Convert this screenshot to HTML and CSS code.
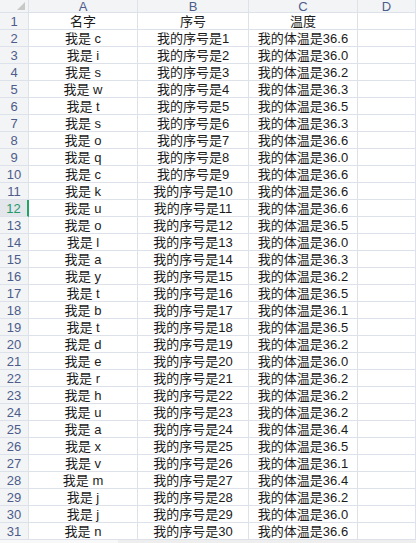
FILE: index.html
```html
<!DOCTYPE html>
<html>
<head>
<meta charset="utf-8">
<link rel="stylesheet" href="styles.css">
</head>
<body>
<div class="sheet">
  <div class="corner"><span class="tri"></span></div><div class="colh">A</div><div class="colh">B</div><div class="colh">C</div><div class="colh">D</div>
  <div class="rowh">1</div><div class="c">名字</div><div class="c">序号</div><div class="c">温度</div><div class="c"></div>
  <div class="rowh">2</div><div class="c">我是 c</div><div class="c">我的序号是1</div><div class="c">我的体温是36.6</div><div class="c"></div>
  <div class="rowh">3</div><div class="c">我是 i</div><div class="c">我的序号是2</div><div class="c">我的体温是36.0</div><div class="c"></div>
  <div class="rowh">4</div><div class="c">我是 s</div><div class="c">我的序号是3</div><div class="c">我的体温是36.2</div><div class="c"></div>
  <div class="rowh">5</div><div class="c">我是 w</div><div class="c">我的序号是4</div><div class="c">我的体温是36.3</div><div class="c"></div>
  <div class="rowh">6</div><div class="c">我是 t</div><div class="c">我的序号是5</div><div class="c">我的体温是36.5</div><div class="c"></div>
  <div class="rowh">7</div><div class="c">我是 s</div><div class="c">我的序号是6</div><div class="c">我的体温是36.3</div><div class="c"></div>
  <div class="rowh">8</div><div class="c">我是 o</div><div class="c">我的序号是7</div><div class="c">我的体温是36.6</div><div class="c"></div>
  <div class="rowh">9</div><div class="c">我是 q</div><div class="c">我的序号是8</div><div class="c">我的体温是36.0</div><div class="c"></div>
  <div class="rowh">10</div><div class="c">我是 c</div><div class="c">我的序号是9</div><div class="c">我的体温是36.6</div><div class="c"></div>
  <div class="rowh">11</div><div class="c">我是 k</div><div class="c">我的序号是10</div><div class="c">我的体温是36.6</div><div class="c"></div>
  <div class="rowh active">12</div><div class="c">我是 u</div><div class="c">我的序号是11</div><div class="c">我的体温是36.6</div><div class="c"></div>
  <div class="rowh">13</div><div class="c">我是 o</div><div class="c">我的序号是12</div><div class="c">我的体温是36.5</div><div class="c"></div>
  <div class="rowh">14</div><div class="c">我是 l</div><div class="c">我的序号是13</div><div class="c">我的体温是36.0</div><div class="c"></div>
  <div class="rowh">15</div><div class="c">我是 a</div><div class="c">我的序号是14</div><div class="c">我的体温是36.3</div><div class="c"></div>
  <div class="rowh">16</div><div class="c">我是 y</div><div class="c">我的序号是15</div><div class="c">我的体温是36.2</div><div class="c"></div>
  <div class="rowh">17</div><div class="c">我是 t</div><div class="c">我的序号是16</div><div class="c">我的体温是36.5</div><div class="c"></div>
  <div class="rowh">18</div><div class="c">我是 b</div><div class="c">我的序号是17</div><div class="c">我的体温是36.1</div><div class="c"></div>
  <div class="rowh">19</div><div class="c">我是 t</div><div class="c">我的序号是18</div><div class="c">我的体温是36.5</div><div class="c"></div>
  <div class="rowh">20</div><div class="c">我是 d</div><div class="c">我的序号是19</div><div class="c">我的体温是36.2</div><div class="c"></div>
  <div class="rowh">21</div><div class="c">我是 e</div><div class="c">我的序号是20</div><div class="c">我的体温是36.0</div><div class="c"></div>
  <div class="rowh">22</div><div class="c">我是 r</div><div class="c">我的序号是21</div><div class="c">我的体温是36.2</div><div class="c"></div>
  <div class="rowh">23</div><div class="c">我是 h</div><div class="c">我的序号是22</div><div class="c">我的体温是36.2</div><div class="c"></div>
  <div class="rowh">24</div><div class="c">我是 u</div><div class="c">我的序号是23</div><div class="c">我的体温是36.2</div><div class="c"></div>
  <div class="rowh">25</div><div class="c">我是 a</div><div class="c">我的序号是24</div><div class="c">我的体温是36.4</div><div class="c"></div>
  <div class="rowh">26</div><div class="c">我是 x</div><div class="c">我的序号是25</div><div class="c">我的体温是36.5</div><div class="c"></div>
  <div class="rowh">27</div><div class="c">我是 v</div><div class="c">我的序号是26</div><div class="c">我的体温是36.1</div><div class="c"></div>
  <div class="rowh">28</div><div class="c">我是 m</div><div class="c">我的序号是27</div><div class="c">我的体温是36.4</div><div class="c"></div>
  <div class="rowh">29</div><div class="c">我是 j</div><div class="c">我的序号是28</div><div class="c">我的体温是36.2</div><div class="c"></div>
  <div class="rowh">30</div><div class="c">我是 j</div><div class="c">我的序号是29</div><div class="c">我的体温是36.0</div><div class="c"></div>
  <div class="rowh">31</div><div class="c">我是 n</div><div class="c">我的序号是30</div><div class="c">我的体温是36.6</div><div class="c"></div>
</div>
<div class="hscroll"><div class="thumb"></div></div>
</body>
</html>
```
FILE: styles.css
```css
html, body {
  margin: 0;
  padding: 0;
  background: #ffffff;
}
body {
  width: 416px;
  height: 543px;
  overflow: hidden;
  font-family: "Liberation Sans", "Noto Sans CJK SC", sans-serif;
  font-size: 13px;
}
.sheet {
  display: grid;
  grid-template-columns: 29px 109px 111px 109px 58px;
  grid-template-rows: 13px repeat(31, 17px);
}
.sheet > div {
  box-sizing: border-box;
  border-right: 1px solid #dce1ea;
  border-bottom: 1px solid #dce1ea;
  display: flex;
  align-items: flex-end;
  justify-content: center;
  line-height: 15px;
  white-space: nowrap;
  overflow: hidden;
}
.corner {
  background: #f3f4f6;
  position: relative;
}
.tri {
  position: absolute;
  right: 3px;
  bottom: 2px;
  width: 0;
  height: 0;
  border-left: 8px solid transparent;
  border-bottom: 8px solid #c8c8c8;
}
.colh {
  background: #f3f4f6;
  color: #4d5c8a;
  font-size: 13px;
}
.sheet > .colh {
  line-height: 13px;
  align-items: center;
}
.rowh {
  background: #f3f4f6;
  color: #4d5c8a;
  font-size: 13px;
}
.sheet > .rowh {
  justify-content: center;
}
.sheet > .rowh.active {
  background: #e3e6ea;
  color: #1f9a6a;
  border-right: 2px solid #21a366;
}
.c {
  color: #1a1a1a;
}
.hscroll {
  height: 3px;
  background: #eeeeee;
  display: flex;
}
.thumb {
  width: 118px;
  background: #f8f8f8;
}
```
